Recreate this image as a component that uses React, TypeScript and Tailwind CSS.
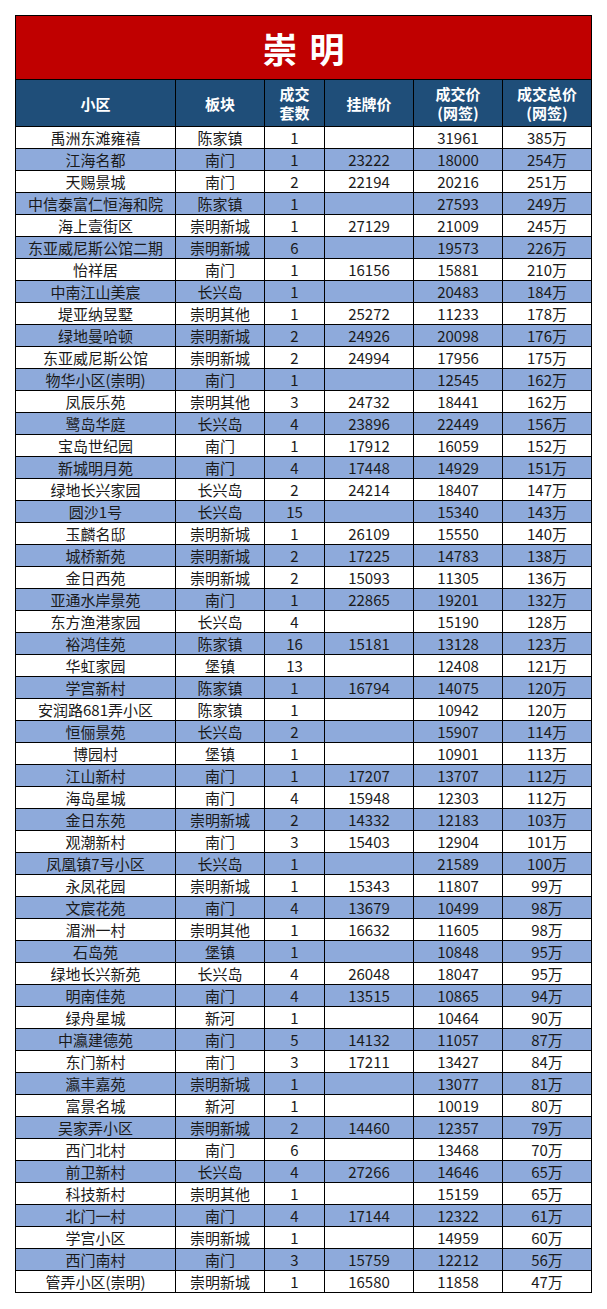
const ROWS: [string, string, string, string, string, string][] = [
  ['禹洲东滩雍禧', '陈家镇', '1', '', '31961', '385万'],
  ['江海名都', '南门', '1', '23222', '18000', '254万'],
  ['天赐景城', '南门', '2', '22194', '20216', '251万'],
  ['中信泰富仁恒海和院', '陈家镇', '1', '', '27593', '249万'],
  ['海上壹街区', '崇明新城', '1', '27129', '21009', '245万'],
  ['东亚威尼斯公馆二期', '崇明新城', '6', '', '19573', '226万'],
  ['怡祥居', '南门', '1', '16156', '15881', '210万'],
  ['中南江山美宸', '长兴岛', '1', '', '20483', '184万'],
  ['堤亚纳昱墅', '崇明其他', '1', '25272', '11233', '178万'],
  ['绿地曼哈顿', '崇明新城', '2', '24926', '20098', '176万'],
  ['东亚威尼斯公馆', '崇明新城', '2', '24994', '17956', '175万'],
  ['物华小区(崇明)', '南门', '1', '', '12545', '162万'],
  ['凤辰乐苑', '崇明其他', '3', '24732', '18441', '162万'],
  ['鹭岛华庭', '长兴岛', '4', '23896', '22449', '156万'],
  ['宝岛世纪园', '南门', '1', '17912', '16059', '152万'],
  ['新城明月苑', '南门', '4', '17448', '14929', '151万'],
  ['绿地长兴家园', '长兴岛', '2', '24214', '18407', '147万'],
  ['圆沙1号', '长兴岛', '15', '', '15340', '143万'],
  ['玉麟名邸', '崇明新城', '1', '26109', '15550', '140万'],
  ['城桥新苑', '崇明新城', '2', '17225', '14783', '138万'],
  ['金日西苑', '崇明新城', '2', '15093', '11305', '136万'],
  ['亚通水岸景苑', '南门', '1', '22865', '19201', '132万'],
  ['东方渔港家园', '长兴岛', '4', '', '15190', '128万'],
  ['裕鸿佳苑', '陈家镇', '16', '15181', '13128', '123万'],
  ['华虹家园', '堡镇', '13', '', '12408', '121万'],
  ['学宫新村', '陈家镇', '1', '16794', '14075', '120万'],
  ['安润路681弄小区', '陈家镇', '1', '', '10942', '120万'],
  ['恒俪景苑', '长兴岛', '2', '', '15907', '114万'],
  ['博园村', '堡镇', '1', '', '10901', '113万'],
  ['江山新村', '南门', '1', '17207', '13707', '112万'],
  ['海岛星城', '南门', '4', '15948', '12303', '112万'],
  ['金日东苑', '崇明新城', '2', '14332', '12183', '103万'],
  ['观潮新村', '南门', '3', '15403', '12904', '101万'],
  ['凤凰镇7号小区', '长兴岛', '1', '', '21589', '100万'],
  ['永凤花园', '崇明新城', '1', '15343', '11807', '99万'],
  ['文宸花苑', '南门', '4', '13679', '10499', '98万'],
  ['湄洲一村', '崇明其他', '1', '16632', '11605', '98万'],
  ['石岛苑', '堡镇', '1', '', '10848', '95万'],
  ['绿地长兴新苑', '长兴岛', '4', '26048', '18047', '95万'],
  ['明南佳苑', '南门', '4', '13515', '10865', '94万'],
  ['绿舟星城', '新河', '1', '', '10464', '90万'],
  ['中瀛建德苑', '南门', '5', '14132', '11057', '87万'],
  ['东门新村', '南门', '3', '17211', '13427', '84万'],
  ['瀛丰嘉苑', '崇明新城', '1', '', '13077', '81万'],
  ['富景名城', '新河', '1', '', '10019', '80万'],
  ['吴家弄小区', '崇明新城', '2', '14460', '12357', '79万'],
  ['西门北村', '南门', '6', '', '13468', '70万'],
  ['前卫新村', '长兴岛', '4', '27266', '14646', '65万'],
  ['科技新村', '崇明其他', '1', '', '15159', '65万'],
  ['北门一村', '南门', '4', '17144', '12322', '61万'],
  ['学宫小区', '崇明新城', '1', '', '14959', '60万'],
  ['西门南村', '南门', '3', '15759', '12212', '56万'],
  ['管弄小区(崇明)', '崇明新城', '1', '16580', '11858', '47万'],
]

const COLS = 'grid grid-cols-[159px_88px_59px_88px_88px_88px] gap-px'

export default function App() {
  return (
    <div className="min-h-screen w-[607px] bg-white pt-[15px] font-['Noto_Sans_CJK_SC','Noto_Sans',sans-serif]">
      <div className="ml-[15px] flex w-[577px] flex-col gap-px border border-black bg-black">
        {/* Title */}
        <div className="flex h-[63px] items-center justify-center bg-[#c00000] pl-[12px]">
          <span className="text-[35px] font-bold leading-none tracking-[12px] text-white">崇明</span>
        </div>

        {/* Header */}
        <div className={COLS}>
          {['小区', '板块', '成交\n套数', '挂牌价', '成交价\n(网签)', '成交总价\n(网签)'].map((h) => (
            <div
              key={h}
              className="flex h-[46px] items-center justify-center whitespace-pre-line bg-[#1f4e79] text-center text-[15px] font-bold leading-[19px] text-white"
            >
              {h}
            </div>
          ))}
        </div>

        {/* Rows */}
        {ROWS.map((row, i) => (
          <div key={i} className={COLS}>
            {row.map((cell, j) => (
              <div
                key={j}
                className={`flex h-[21px] items-center justify-center whitespace-nowrap text-[15px] leading-none text-[#1a1a1a] ${
                  i % 2 === 1 ? 'bg-[#8eaadb]' : 'bg-white'
                }`}
              >
                {cell}
              </div>
            ))}
          </div>
        ))}
      </div>
    </div>
  )
}
